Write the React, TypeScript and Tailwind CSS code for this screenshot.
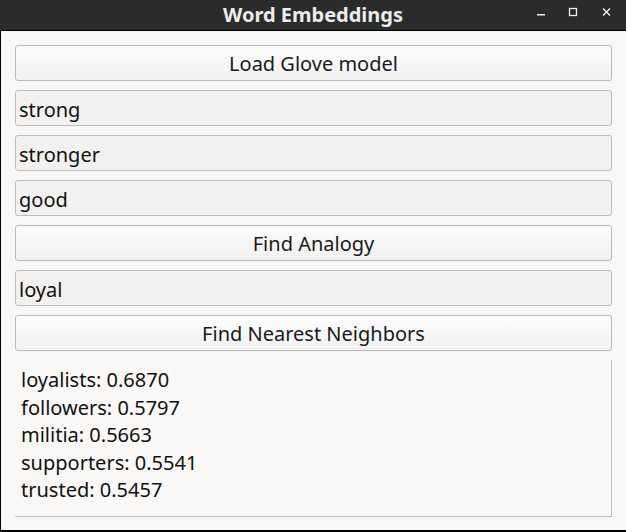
import React from "react";

const results = [
    "loyalists: 0.6870",
    "followers: 0.5797",
    "militia: 0.5663",
    "supporters: 0.5541",
    "trusted: 0.5457",
];

function Button({ label }: { label: string }) {
    return (
        <button className="h-9 w-full rounded-[3px] border border-[#b9b9b9] bg-gradient-to-b from-[#fcfcfc] to-[#f1f1f1] pt-[2px] text-[20px] text-[#1a1a1a] leading-none">
            {label}
        </button>
    );
}

function Field({ value }: { value: string }) {
    return (
        <div className="flex h-9 w-full items-center rounded-[3px] border border-[#bdbdbd] bg-[#f2f1ef] pl-[3px] pt-[3px] text-[20px] text-[#111]">
            {value}
        </div>
    );
}

export default function App() {
    return (
        <div className="flex h-[532px] w-[626px] flex-col bg-black font-['Noto_Sans',sans-serif]">
            <div className="relative flex h-[30px] items-center justify-center bg-[#2b2b2b]">
                <span className="text-[20px] font-bold text-[#ececec]">Word Embeddings</span>
                <div className="absolute right-0 top-0 flex h-full items-center">
                    <svg width="34" height="30" viewBox="0 0 34 30">
                        <rect x="13" y="14" width="8" height="1.5" fill="#eee" />
                    </svg>
                    <svg width="34" height="30" viewBox="0 0 34 30">
                        <rect x="11.5" y="8.5" width="7" height="7" fill="none" stroke="#eee" strokeWidth="1.3" />
                    </svg>
                    <svg width="34" height="30" viewBox="0 0 34 30">
                        <path d="M11 8.5l7 7M18 8.5l-7 7" stroke="#eee" strokeWidth="1.4" />
                    </svg>
                </div>
            </div>
            <div className="mt-px mb-[2px] ml-px flex flex-1 flex-col gap-[9px] bg-[#f8f7f5] pl-[14px] pr-[14px] pt-[14px]">
                <Button label="Load Glove model" />
                <Field value="strong" />
                <Field value="stronger" />
                <Field value="good" />
                <Button label="Find Analogy" />
                <Field value="loyal" />
                <Button label="Find Nearest Neighbors" />
                <div className="h-[157px] border-b border-r border-[#bdbdbd] bg-[#f9f8f6] pl-[6px] pt-[6px] text-[20px] leading-[27.5px] text-[#111]">
                    {results.map((r) => (
                        <div key={r}>{r}</div>
                    ))}
                </div>
            </div>
        </div>
    );
}
